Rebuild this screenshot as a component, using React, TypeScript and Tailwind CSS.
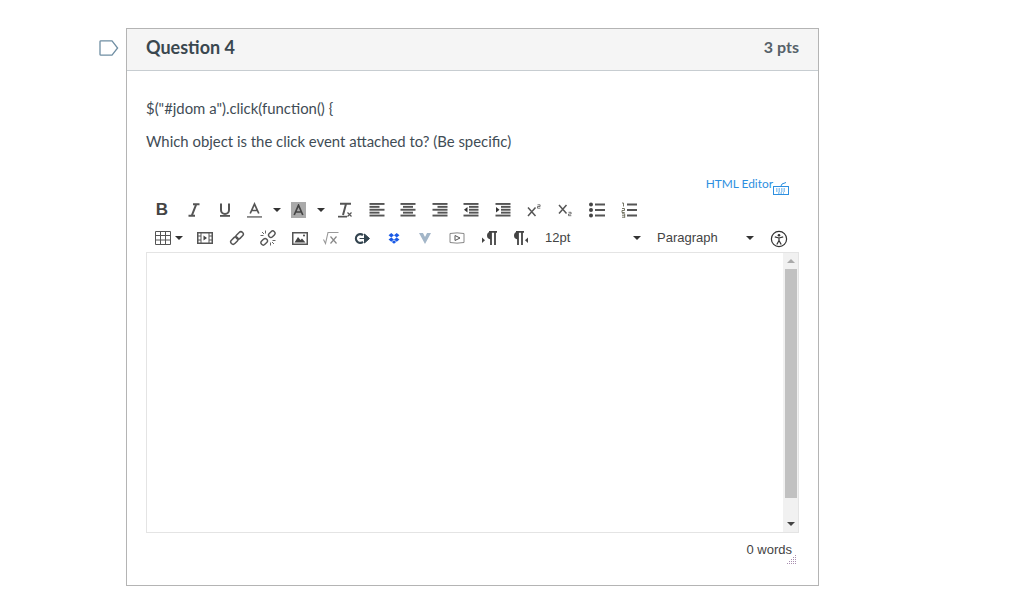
import React from "react";

const Lines = ({ rows }: { rows: [number, number][] }) => (
  <svg width="16" height="16" viewBox="0 0 16 16" className="block">
    {rows.map(([x, w], i) => (
      <rect key={i} x={x} y={1 + i * 2.9} width={w} height="1.9" fill="#555" />
    ))}
  </svg>
);
const Indent = ({ dir }: { dir: "l" | "r" }) => (
  <svg width="16" height="16" viewBox="0 0 16 16" className="block">
    <rect x="0.5" y="1" width="15" height="1.9" fill="#555" />
    <rect x="6" y="3.9" width="9.5" height="1.9" fill="#555" />
    <rect x="6" y="6.8" width="9.5" height="1.9" fill="#555" />
    <rect x="6" y="9.7" width="9.5" height="1.9" fill="#555" />
    <rect x="0.5" y="12.6" width="15" height="1.9" fill="#555" />
    <path d={dir === "l" ? "M4.5 5L1 7.8L4.5 10.5Z" : "M1 5L4.5 7.8L1 10.5Z"} fill="#333" />
  </svg>
);
const Caret = () => <span className="block w-0 h-0 border-x-[4px] border-x-transparent border-t-[4px] border-t-[#333]" />;

const Glyph = ({ className, children }: { className: string; children: React.ReactNode }) => (
  <span className={`flex items-center justify-center h-[22px] shrink-0 ${className}`}>{children}</span>
);

export default function App() {
  return (
    <div className="w-[1024px] h-[611px] bg-white overflow-hidden pt-[28px] pl-[99px] flex items-start font-['Lato',sans-serif] text-[#2d3b45]">
      <svg width="20" height="16" viewBox="0 0 20 16" className="mt-[12px] mr-[7px] shrink-0">
        <path d="M1 1.5A.8.8 0 0 1 1.8.8H13L18.6 8L13 15.2H1.8A.8.8 0 0 1 1 14.5Z" fill="none" stroke="#6f8ea3" strokeWidth="1.3" />
      </svg>
      <div className="w-[693px] h-[558px] border border-[#b4b4b4] shrink-0 flex flex-col">
        <div className="h-[42px] bg-[#f5f5f5] border-b border-[#c7cdd1] flex items-center justify-between pl-[19px] pr-[19px] pb-[5px] shrink-0">
          <span className="text-[18px] font-bold leading-none text-[#3a474f]">Question 4</span>
          <span className="text-[16px] font-bold leading-none text-[#566169]">3 pts</span>
        </div>
        <div className="px-[19px] pt-[27px] flex flex-col">
          <p className="text-[14.9px] leading-[20px] text-[#3f4c55]">$("#jdom a").click(function() {"{"}</p>
          <p className="text-[14.9px] leading-[20px] mt-[13px] text-[#3f4c55]">Which object is the click event attached to? (Be specific)</p>
          <div className="flex justify-end items-end mt-[23px] h-[20px] pr-[9px]">
            <span className="text-[11.9px] leading-[20px] text-[#2d8fe0]">HTML Editor</span>
            <svg width="18" height="14" viewBox="0 0 18 14" className="-ml-[1px] -mb-[1px]">
              <rect x="1.5" y="5.5" width="15" height="8" fill="none" stroke="#2d8fe0" />
              <path d="M9 5L10 3L14 1.5" fill="none" stroke="#2d8fe0" />
              <path d="M4 8h10M4 10h10M6 12h6" stroke="#2d8fe0" strokeDasharray="1.5 1" />
            </svg>
          </div>
          {/* row 1 */}
          <div className="flex items-center h-[22px] mt-[5px] text-[#333]">
            <Glyph className="w-[32px]"><span className="font-['Liberation_Sans',sans-serif] font-bold text-[17px] text-[#444]">B</span></Glyph>
            <Glyph className="w-[32px]">
              <svg width="12" height="14" viewBox="0 0 12 14"><path d="M5 1.2h6.5M.5 12.8H7M8.3 1.2L3.7 12.8" fill="none" stroke="#555" strokeWidth="2" /></svg>
            </Glyph>
            <Glyph className="w-[29px]">
              <svg width="12" height="14" viewBox="0 0 12 14"><path d="M2 .5v6.5a4 4 0 0 0 8 0V.5" fill="none" stroke="#555" strokeWidth="2" /><rect x="1" y="12" width="10" height="1.8" fill="#555" /></svg>
            </Glyph>
            <Glyph className="w-[31px]">
              <svg width="15" height="16" viewBox="0 0 15 16"><path d="M3.2 11.5L7.5 2L11.8 11.5M4.5 8.5h6" fill="none" stroke="#555" strokeWidth="1.7" /><rect x="0" y="14" width="15" height="1.8" fill="#888" /></svg>
            </Glyph>
            <Glyph className="w-[13px]"><Caret /></Glyph>
            <Glyph className="w-[31px]">
              <span className="w-[15px] h-[16px] bg-[#aaa] flex items-center justify-center">
                <svg width="11" height="12" viewBox="0 0 11 12"><path d="M1.2 11L5.5 1.2L9.8 11M2.5 8h6" fill="none" stroke="#444" strokeWidth="1.7" /></svg>
              </span>
            </Glyph>
            <Glyph className="w-[13px]"><Caret /></Glyph>
            <Glyph className="w-[31px] ml-[3px]">
              <svg width="15" height="16" viewBox="0 0 15 16"><path d="M2 1.8h11M8 2L5 13" fill="none" stroke="#555" strokeWidth="2" /><rect x="0" y="13.8" width="9" height="1.7" fill="#555" /><path d="M9.5 10.5l4 4M13.5 10.5l-4 4" stroke="#555" strokeWidth="1.2" /></svg>
            </Glyph>
            <Glyph className="w-[31.5px]"><Lines rows={[[0.5, 15], [0.5, 10], [0.5, 15], [0.5, 10], [0.5, 15]]} /></Glyph>
            <Glyph className="w-[31.5px]"><Lines rows={[[0.5, 15], [3, 10], [0.5, 15], [3, 10], [0.5, 15]]} /></Glyph>
            <Glyph className="w-[31.5px]"><Lines rows={[[0.5, 15], [5.5, 10], [0.5, 15], [5.5, 10], [0.5, 15]]} /></Glyph>
            <Glyph className="w-[31.5px]"><Indent dir="l" /></Glyph>
            <Glyph className="w-[31.5px]"><Indent dir="r" /></Glyph>
            <Glyph className="w-[31.5px]">
              <svg width="14" height="13" viewBox="0 0 14 13"><path d="M1 3.5l7.5 8.5M8.5 3.5L1 12" stroke="#555" strokeWidth="1.5" /><path d="M10.5 .8h2.6v1.7h-2.6v1.7h2.8" fill="none" stroke="#555" strokeWidth=".8" /></svg>
            </Glyph>
            <Glyph className="w-[30px]">
              <svg width="14" height="13" viewBox="0 0 14 13"><path d="M1 1l7.5 8.5M8.5 1L1 9.5" stroke="#555" strokeWidth="1.5" /><path d="M10.5 8.3h2.6V10h-2.6v1.7h2.8" fill="none" stroke="#555" strokeWidth=".8" /></svg>
            </Glyph>
            <Glyph className="w-[33px]">
              <svg width="16" height="16" viewBox="0 0 16 16"><circle cx="2" cy="2.5" r="2" fill="#444" /><circle cx="2" cy="8" r="2" fill="#444" /><circle cx="2" cy="13.5" r="2" fill="#444" /><path d="M6 2.5h10M6 8h10M6 13.5h10" stroke="#555" strokeWidth="1.9" /></svg>
            </Glyph>
            <Glyph className="w-[32px]">
              <svg width="16" height="16" viewBox="0 0 16 16"><path d="M1 1h1.5v3.5M1 6.5h2.5v2H1v2h2.7M1 11.8h2.7v4H1M1 13.8h2.7" fill="none" stroke="#665" strokeWidth=".9" /><path d="M6 2.5h10M6 8h10M6 13.5h10" stroke="#555" strokeWidth="1.9" /></svg>
            </Glyph>
          </div>
          {/* row 2 */}
          <div className="flex items-center h-[22px] mt-[6px] text-[#333]">
            <Glyph className="w-[25px] ml-[9px] justify-start">
              <svg width="16" height="14" viewBox="0 0 16 14"><path d="M.5.5h15v13H.5zM.5 4.5h15M.5 9h15M5.5 .5v13M10.5 .5v13" fill="none" stroke="#555" /></svg>
            </Glyph>
            <Glyph className="w-[10px] -ml-[6px]"><Caret /></Glyph>
            <Glyph className="w-[32px] ml-[5px]">
              <svg width="16" height="12" viewBox="0 0 16 12"><rect x=".75" y=".75" width="14.5" height="10.5" fill="none" stroke="#555" strokeWidth="1.5" /><path d="M4 0v12M12 0v12M1 4h3M1 8h3M12 4h3M12 8h3" stroke="#555" /><path d="M6.5 3.5L10 6L6.5 8.5Z" fill="#444" /></svg>
            </Glyph>
            <Glyph className="w-[31px]">
              <svg width="16" height="16" viewBox="0 0 16 16" fill="none" stroke="#555" strokeWidth="1.5">
                <rect x="-4.2" y="-2.4" width="8.4" height="4.8" rx="2.4" transform="translate(10.6 5.4) rotate(-45)" />
                <rect x="-4.2" y="-2.4" width="8.4" height="4.8" rx="2.4" transform="translate(5.4 10.6) rotate(-45)" />
              </svg>
            </Glyph>
            <Glyph className="w-[32px]">
              <svg width="16" height="16" viewBox="0 0 16 16" fill="none" stroke="#555">
                <rect x="-3.6" y="-2.3" width="7.2" height="4.6" rx="2.3" transform="translate(11.8 4.2) rotate(-45)" strokeWidth="1.4" />
                <rect x="-3.6" y="-2.3" width="7.2" height="4.6" rx="2.3" transform="translate(4.2 11.8) rotate(-45)" strokeWidth="1.4" />
                <path d="M5.5 .5v3M.5 5.5h3M2 2l2 2M10.5 15.5v-3M15.5 10.5h-3M14 14l-2-2" stroke="#666" />
              </svg>
            </Glyph>
            <Glyph className="w-[31px]">
              <svg width="16" height="13" viewBox="0 0 16 13"><rect x=".75" y=".75" width="14.5" height="11.5" fill="none" stroke="#555" strokeWidth="1.5" /><path d="M2.5 10.5L6 5l2.5 3L10 6.5l3.5 4Z" fill="#444" /><circle cx="12" cy="3.5" r="1" fill="#444" /></svg>
            </Glyph>
            <Glyph className="w-[31px]">
              <svg width="16" height="14" viewBox="0 0 16 14"><path d="M.5 8.5L2.5 12.5L5 1.5H15.5" fill="none" stroke="#999" strokeWidth="1.1" /><path d="M7.5 5.5l6 7M13.5 5.5l-6 7" stroke="#888" strokeWidth="1.2" /></svg>
            </Glyph>
            <Glyph className="w-[32px]">
              <svg width="16" height="13" viewBox="0 0 16 13"><path d="M9 3.2A4.3 4.3 0 1 0 9 9.8" fill="none" stroke="#33444f" strokeWidth="2.2" /><path d="M5.5 6.5H11M10.5 2L15.5 6.5L10.5 11Z" fill="#33444f" stroke="#33444f" /></svg>
            </Glyph>
            <Glyph className="w-[31px]">
              <svg width="12" height="11" viewBox="0 0 11 10"><path d="M3 0L5.5 2L3 4L.5 2ZM8 0L10.5 2L8 4L5.5 2ZM3 4L5.5 6L3 8L.5 6ZM8 4L10.5 6L8 8L5.5 6ZM5.5 6.6L7.5 8.2L5.5 9.8L3.5 8.2Z" fill="#1a5ae6" /></svg>
            </Glyph>
            <Glyph className="w-[32px]">
              <svg width="12" height="11" viewBox="0 0 12 11"><path d="M0 0H4L6 4L8 0H12L6 11Z" fill="#a3b6c8" /><path d="M4.5 0L6 3L7.5 0L6 1Z" fill="#fff" /></svg>
            </Glyph>
            <Glyph className="w-[32px]">
              <svg width="16" height="12" viewBox="0 0 16 12"><path d="M1 1.5Q8 .2 15 1.5V10.5Q8 11.8 1 10.5Z" fill="none" stroke="#888" /><path d="M6 3.5L11 6L6 8.5Z" fill="none" stroke="#555" /></svg>
            </Glyph>
            <Glyph className="w-[32px]">
              <svg width="15" height="14" viewBox="0 0 15 14"><path d="M7 .8H15M9 .8V14M13 .8V14" stroke="#444" strokeWidth="1.8" fill="none" /><path d="M9 .8A4 3.8 0 0 0 9 8.4Z" fill="#444" /><path d="M0 6.5l3 2.8L0 12Z" fill="#444" /></svg>
            </Glyph>
            <Glyph className="w-[31px]">
              <svg width="15" height="14" viewBox="0 0 15 14"><path d="M3 .8H11M5 .8V14M9 .8V14" stroke="#444" strokeWidth="1.8" fill="none" /><path d="M5 .8A4 3.8 0 0 0 5 8.4Z" fill="#444" /><path d="M15 6.5l-3 2.8L15 12Z" fill="#444" /></svg>
            </Glyph>
            <span className="font-['Liberation_Sans',sans-serif] text-[13px] leading-[22px] text-[#444] ml-[9px] w-[88px] shrink-0">12pt</span>
            <Caret />
            <span className="font-['Liberation_Sans',sans-serif] text-[13px] leading-[22px] text-[#444] ml-[16px] w-[89px] shrink-0">Paragraph</span>
            <Caret />
            <svg width="18" height="18" viewBox="0 0 18 18" className="ml-[16px] mt-[2px] shrink-0">
              <circle cx="9" cy="9" r="7.6" fill="none" stroke="#333" strokeWidth="1.2" />
              <circle cx="9" cy="5.2" r="1.3" fill="#333" />
              <path d="M4.8 6.8L9 8L13.2 6.8M9 8V10.5M9 10.5L6.8 14.5M9 10.5L11.2 14.5" fill="none" stroke="#333" strokeWidth="1.2" />
            </svg>
          </div>
          {/* editor */}
          <div className="mt-[3px] h-[281px] border border-[#e4e4e4] flex justify-end">
            <div className="w-[15px] bg-[#f1f1f1] flex flex-col items-center">
              <span className="mt-[6px] block w-0 h-0 border-x-[4px] border-x-transparent border-b-[4px] border-b-[#aaa]" />
              <span className="mt-[6px] w-[12px] h-[229px] bg-[#c1c1c1]" />
              <span className="mt-[24px] block w-0 h-0 border-x-[4px] border-x-transparent border-t-[4px] border-t-[#444]" />
            </div>
          </div>
          <div className="relative h-[32px]">
            <span className="absolute right-[7px] top-[8px] font-['Liberation_Sans',sans-serif] text-[13px] leading-[18px] text-[#444]">0 words</span>
            <svg width="10" height="10" viewBox="0 0 10 10" className="absolute right-[2px] top-[21px]">
              <path d="M8 1.5h2M6 3.5h4M4 5.5h6M2 7.5h8M0 9.5h10" stroke="#a98fb0" strokeWidth="1" strokeDasharray="1 1" />
            </svg>
          </div>
        </div>
      </div>
    </div>
  );
}
